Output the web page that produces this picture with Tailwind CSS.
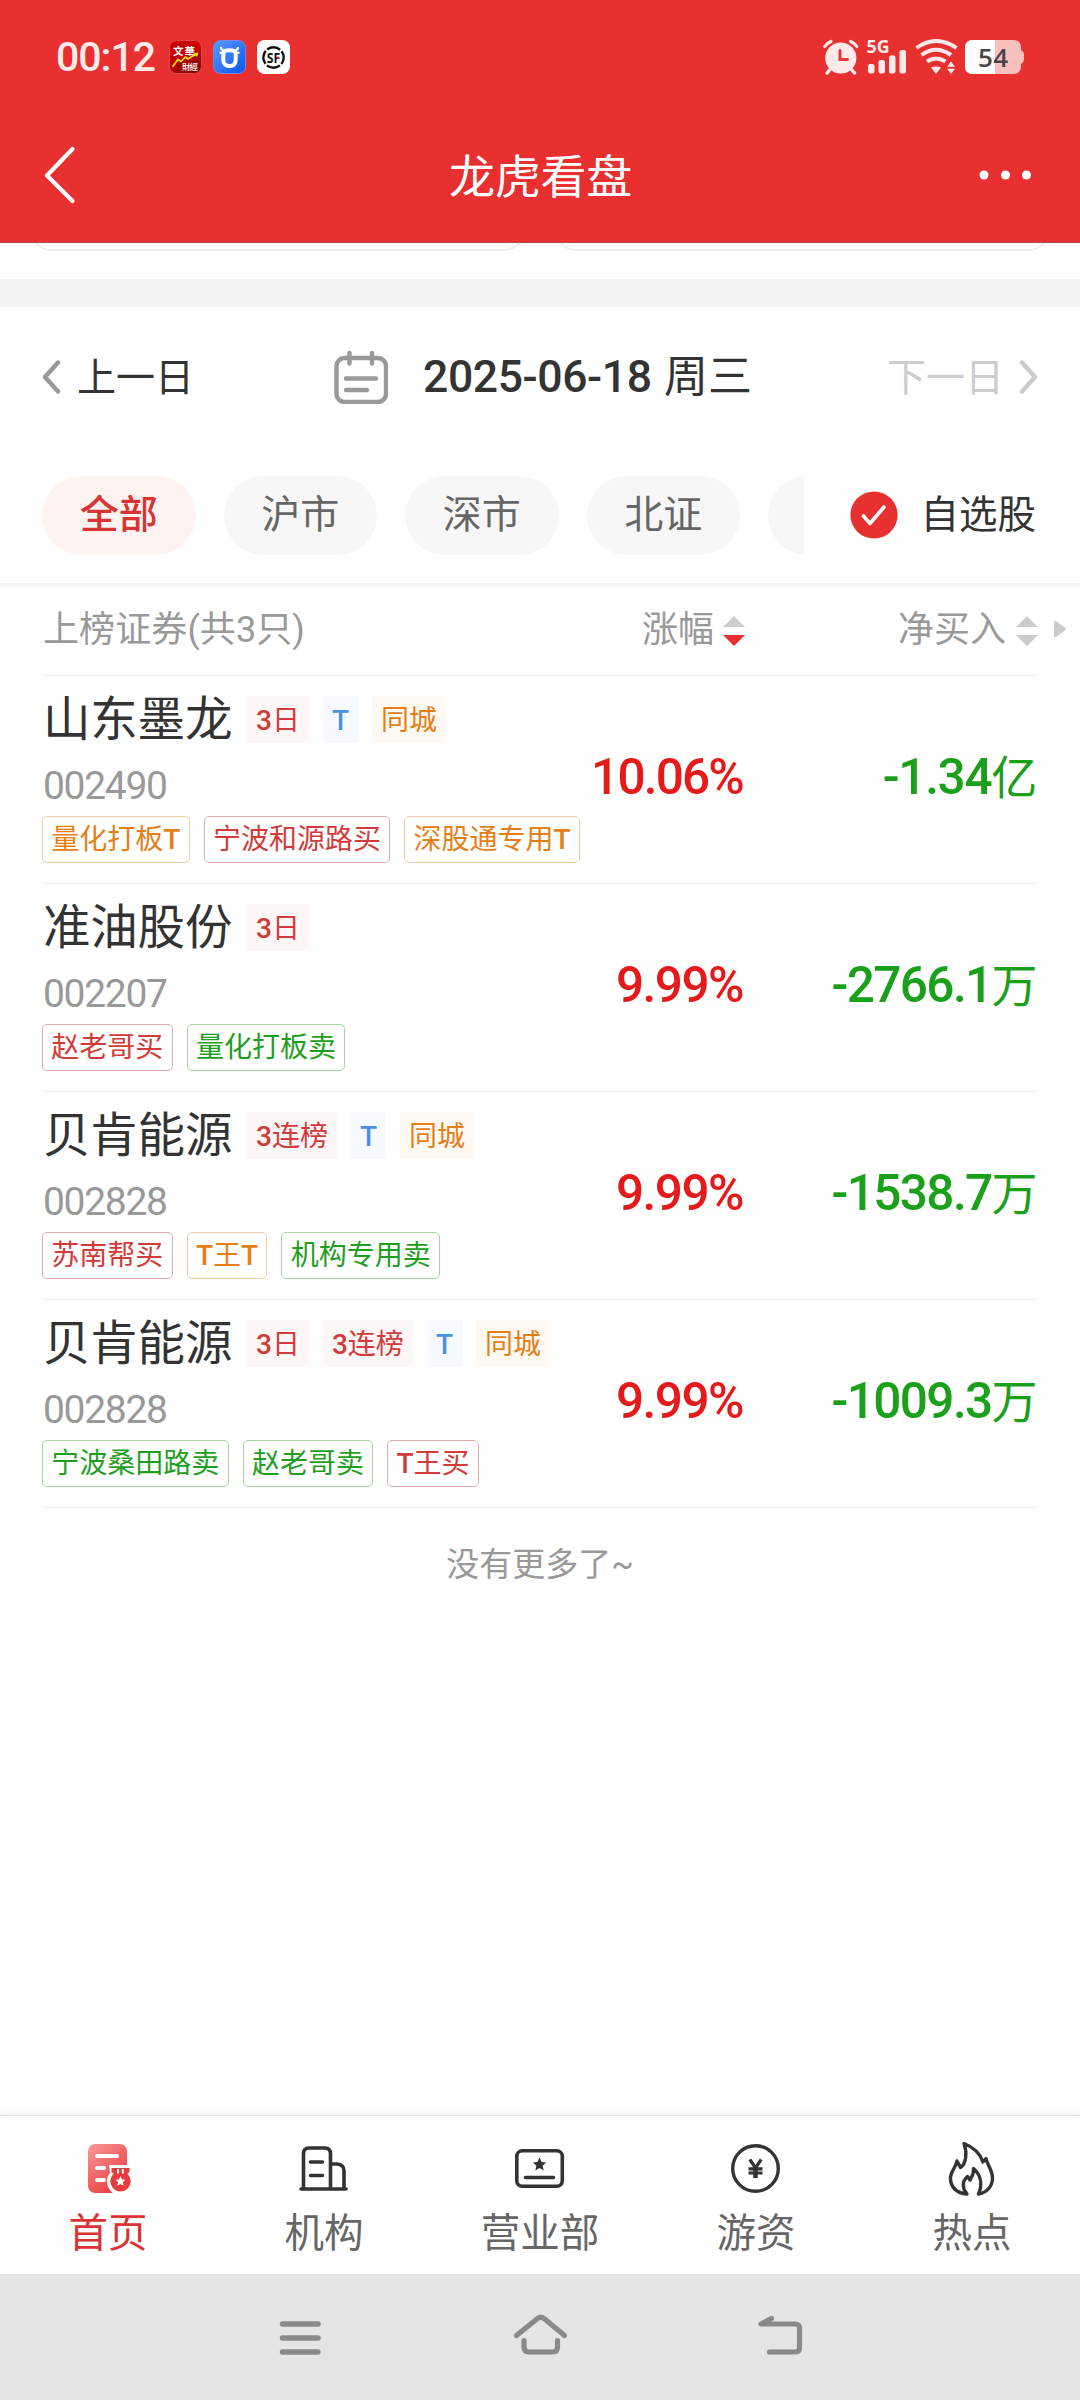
<!DOCTYPE html>
<html lang="zh-CN">
<head>
  <meta charset="UTF-8">
  <meta name="viewport" content="width=device-width, initial-scale=1.0">
  <title>龙虎看盘</title>
  <script src="https://cdn.jsdelivr.net/npm/@tailwindcss/browser@4"></script>
  <style>
    body {
      font-family: Roboto, 'Noto Sans CJK SC', sans-serif;
    }
  </style>
</head>
<body class="w-[1080px] h-[2400px] overflow-hidden bg-white flex flex-col leading-none whitespace-nowrap text-[#333]">

  <!-- Header -->
  <header class="h-[243px] shrink-0 bg-[#e83030] border-b border-[#a84a4a] text-white">
    <div class="h-[114px] flex items-center pl-[56px] pr-[55px]">
      <span class="text-[41px] font-medium text-[#ffeaea] tracking-[-1px] w-[113px]">00:12</span>
      <svg class="w-[33px] h-[34px] shrink-0" viewBox="0 0 33 34">
        <defs><linearGradient id="wh" x1="0" y1="0" x2="0.4" y2="1"><stop offset="0.4" stop-color="#cc0000"/><stop offset="1" stop-color="#8c0606"/></linearGradient></defs>
        <rect x="0.5" y="0.5" width="32" height="33" rx="7" fill="url(#wh)" stroke="#e04848"/>
        <text x="4" y="14.5" font-size="10.5" font-weight="700" fill="#fff" textLength="22" font-family="Noto Sans CJK TC">文華</text>
        <text x="13" y="29.5" font-size="8.5" font-weight="500" fill="#fff" textLength="16" font-family="Noto Sans CJK TC">財經</text>
        <path d="M3.5 27 9 19.5 12 21.5 16.5 17 19 19 27 14" fill="none" stroke="#ffe600" stroke-width="1.7"/>
        <path d="M24.5 13.5 29.5 12.5 28 17z" fill="#ffe600"/>
      </svg>
      <svg class="w-[33px] h-[34px] shrink-0 ml-[11px]" viewBox="0 0 33 34">
        <defs><linearGradient id="bull" x1="0" y1="0" x2="1" y2="1"><stop offset="0" stop-color="#5b9bfb"/><stop offset="1" stop-color="#0a55f0"/></linearGradient></defs>
        <rect x="0.5" y="0.5" width="32" height="33" rx="7" fill="url(#bull)" stroke="#7d86e0"/>
        <path d="M11.5 11Q16.500 9.500 21.500 11 22.500 12 22.700 15.500V19.500Q22.700 26 16.500 26T10.300 19.500V15.500Q10.500 12 11.500 11z" fill="none" stroke="#fff" stroke-width="4"/>
        <path d="M8 7Q8 10.500 12 11M6.500 12.500 11 13.500M25 7Q25 10.500 21 11M26.500 12.500 22 13.500" fill="none" stroke="#fff" stroke-width="2.200"/>
      </svg>
      <svg class="w-[33px] h-[34px] shrink-0 ml-[11px]" viewBox="0 0 33 34">
        <rect width="33" height="34" rx="7.500" fill="#fff"/>
        <circle cx="16.500" cy="17.500" r="10.200" fill="none" stroke="#111" stroke-width="2.400" stroke-dasharray="14.020 2" stroke-dashoffset="-9"/>
        <text x="9.700" y="22.500" font-size="13.500" font-weight="700" fill="#111" textLength="13.500" lengthAdjust="spacingAndGlyphs" font-family="Open Sans">SF</text>
        <circle cx="21" cy="17.600" r="1.200" fill="#e33"/>
      </svg>

      <div class="ml-auto flex items-center">
        <svg class="w-[36px] h-[36px]" viewBox="0 0 36 36">
          <circle cx="17.800" cy="19" r="15.600" fill="#ffeaea"/>
          <path d="M1.800 7.500Q4 4 8 2.500M33.800 7.500Q31.600 4 27.600 2.500" fill="none" stroke="#ffeaea" stroke-width="3.200" stroke-linecap="round"/>
          <path d="M6.500 31 4.200 34M29 31 31.500 34" stroke="#ffeaea" stroke-width="3.500" stroke-linecap="round"/>
          <path d="M17 11.500V20.500H24.500" fill="none" stroke="#e23a3a" stroke-width="3" stroke-linecap="round"/>
        </svg>
        <svg class="w-[42px] h-[36px] ml-[7px] overflow-visible" viewBox="0 0 42 36" fill="#ffeaea">
          <text x="0.500" y="13.500" font-size="17" font-weight="700" textLength="23" lengthAdjust="spacingAndGlyphs" font-family="Open Sans">5G</text>
          <rect x="2" y="25" width="6.500" height="9.500" rx="2.200"/>
          <rect x="12.500" y="21" width="6.500" height="13.500" rx="2.200"/>
          <rect x="23" y="16.500" width="6.500" height="18" rx="2.200"/>
          <rect x="33.500" y="11" width="6.500" height="23.500" rx="2.200"/>
        </svg>
        <svg class="w-[43px] h-[36px] ml-[7px]" viewBox="0 0 43 36">
          <path d="M1.500 9Q21 -5 41.500 9M6.500 16Q21 5.500 36 16M12 22.500Q21 16.500 30.500 22.500" fill="none" stroke="#ffeaea" stroke-width="4"/>
          <path d="M16 28.500Q21 26.500 26 28.500L21 35zM32 27.800 36 22.500 40 27.800zM32 29.800 36 35 40 29.800z" fill="#ffeaea"/>
        </svg>
        <svg class="w-[60px] h-[34px] ml-[7px]" viewBox="0 0 60 34">
          <path d="M8 0H48Q56 0 56 8V10Q59 12 59 14V20Q59 22 56 24V26Q56 34 48 34H8Q0 34 0 26V8Q0 0 8 0z" fill="#f8bfbf"/>
          <path d="M8 0H30V34H8Q0 34 0 26V8Q0 0 8 0z" fill="#fff"/>
          <text x="13" y="26.500" font-size="26" font-weight="600" fill="#4a4444" textLength="30" font-family="Open Sans">54</text>
        </svg>
      </div>
    </div>
    <div class="h-[122px] flex items-center justify-between pl-[43px] pr-[47px]">
      <svg class="w-[33px] h-[58px]" viewBox="0 0 33 58"><path d="M29.500 3 4 29.500 29.500 55" fill="none" stroke="#fff" stroke-width="4.200" stroke-linecap="round" stroke-linejoin="round"/></svg>
      <h1 class="text-[46px] pt-[4px] pl-[26px] tracking-[-0.3px]">龙虎看盘</h1>
      <svg class="w-[54px] h-[10px]" viewBox="0 0 54 10" fill="#fff"><circle cx="5" cy="5" r="4.500"/><circle cx="26.500" cy="5" r="4.500"/><circle cx="47.500" cy="5" r="4.500"/></svg>
    </div>
  </header>

  <!-- Bottom edges of the cards scrolled under the header -->
  <div class="h-[36px] shrink-0 overflow-hidden flex items-start gap-[26px] pl-[28px]">
    <div class="w-[499px] h-[48px] -mt-[40px] rounded-[24px] border-2 border-[#eee]"></div>
    <div class="w-[499px] h-[48px] -mt-[40px] rounded-[24px] border-2 border-[#eee]"></div>
  </div>
  <div class="h-[28px] shrink-0 bg-[#f4f4f4]"></div>

  <!-- Date switcher -->
  <div class="h-[140px] shrink-0 flex items-center pl-[42px] pr-[42px]">
    <svg class="w-[19px] h-[34px]" viewBox="0 0 19 34"><path d="M16 2.500 3 17 16 31.500" fill="none" stroke="#999" stroke-width="4.400" stroke-linecap="round" stroke-linejoin="round"/></svg>
    <span class="text-[39px] ml-[16px] pt-[3px]">上一日</span>
    <svg class="w-[54px] h-[54px] ml-[140px]" viewBox="0 0 54 54" fill="none" stroke="#999" stroke-width="4.400" stroke-linecap="round">
      <rect x="2.500" y="8" width="49.500" height="44" rx="8"/>
      <path d="M15.500 3V13.500M38 3V13.500M12 28.500H42M12 40H33"/>
    </svg>
    <div class="ml-[35px] pt-[1px] flex items-baseline">
      <span class="text-[44.5px] font-medium tracking-[-0.4px] w-[241px]">2025-06-18</span>
      <span class="text-[44px]">周三</span>
    </div>
    <span class="ml-auto text-[39px] text-[#ccc] pt-[3px]">下一日</span>
    <svg class="w-[19px] h-[34px] ml-[15px]" viewBox="0 0 19 34"><path d="M3 2.500 16 17 3 31.500" fill="none" stroke="#ccc" stroke-width="4.400" stroke-linecap="round" stroke-linejoin="round"/></svg>
  </div>

  <!-- Market filter -->
  <div class="h-[139px] shrink-0 flex items-center border-b-[3px] border-[#f4f4f4] pl-[42px] pr-[44px]">
    <div class="w-[762px] h-[79px] overflow-hidden flex gap-[28px] text-[39px] text-[#666]">
      <div class="w-[153.5px] h-[79px] shrink-0 rounded-full bg-[#fff3f2] text-[#d93434] font-medium flex items-center justify-center">全部</div>
      <div class="w-[153.5px] h-[79px] shrink-0 rounded-full bg-[#f7f7f7] flex items-center justify-center">沪市</div>
      <div class="w-[153.5px] h-[79px] shrink-0 rounded-full bg-[#f7f7f7] flex items-center justify-center">深市</div>
      <div class="w-[153.5px] h-[79px] shrink-0 rounded-full bg-[#f7f7f7] flex items-center justify-center">北证</div>
      <div class="w-[153.5px] h-[79px] shrink-0 rounded-full bg-[#f7f7f7]"></div>
    </div>
    <svg class="w-[48px] h-[48px] ml-[46px]" viewBox="0 0 48 48"><circle cx="24" cy="24" r="23.600" fill="#e83030"/><path d="M13.500 25 20 32.500 34 16" fill="none" stroke="#fff" stroke-width="3.600" stroke-linecap="round" stroke-linejoin="round"/></svg>
    <span class="ml-auto text-[38.5px]">自选股</span>
  </div>

  <!-- Table head -->
  <div class="h-[90px] shrink-0 ml-[42px] mr-[42px] border-b border-[#ededed] flex items-center text-[36px] text-[#999]">
    <div class="w-[540px] shrink-0 pb-[2px] pl-[1px] tracking-[0.1px]">上榜证券(共3只)</div>
    <div class="w-[163px] shrink-0 flex items-center justify-end">
      <span class="pb-[2px]">涨幅</span>
      <svg class="w-[22px] h-[30px] ml-[9px]" viewBox="0 0 22 30"><path d="M0 11 11 0 22 11z" fill="#ccc"/><path d="M0 19 11 30 22 19z" fill="#e83030"/></svg>
    </div>
    <div class="flex-1 flex items-center justify-end">
      <span class="pb-[2px]">净买入</span>
      <svg class="w-[22px] h-[30px] ml-[10px]" viewBox="0 0 22 30" fill="#ccc"><path d="M0 11 11 0 22 11zM0 19 11 30 22 19z"/></svg>
    </div>
    <svg class="w-[13px] h-[18px] ml-[16px] -mr-[29px] mb-[4px]" viewBox="0 0 13 18" fill="#ccc"><path d="M0 2Q0 0 2 1L11 7.500Q13 9 11 10.500L2 17Q0 18 0 16z"/></svg>
  </div>

  <!-- Stock list -->
  <main class="flex-1 px-[42px]">
    <div class="h-[208px] border-b border-[#ededed] flex items-center">
      <div class="w-[540px] shrink-0">
        <div class="h-[47px] flex items-center gap-[14px] text-[28px]">
          <span class="text-[47.5px] w-[191px] pt-[3px] pl-[1px] tracking-[-0.2px]">山东墨龙</span>
          <span class="h-[47px] px-[9px] pt-[2px] bg-[#fdf6f6] text-[#d33a3a] flex items-center"><b class="font-medium">3</b>日</span>
          <span class="h-[47px] px-[9px] pt-[2px] bg-[#f6faff] text-[#4a90e2] flex items-center"><b class="font-medium">T</b></span>
          <span class="h-[47px] px-[9px] pt-[2px] bg-[#fff9f4] text-[#e67e17] flex items-center">同城</span>
        </div>
        <div class="h-[73px] pt-[13px] flex items-center text-[39px] text-[#999] tracking-[-1.3px] pl-[1px]">002490</div>
        <div class="flex gap-[14px] text-[28px]">
          <span class="h-[47px] px-[8.3px] pt-[1px] rounded-[5px] border border-[#f3cfa5] text-[#e67e17] flex items-center">量化打板<b class="font-medium">T</b></span>
          <span class="h-[47px] px-[8.3px] pt-[1px] rounded-[5px] border border-[#e3abab] text-[#d33a3a] flex items-center">宁波和源路买</span>
          <span class="h-[47px] px-[8.3px] pt-[1px] rounded-[5px] border border-[#f3cfa5] text-[#e67e17] flex items-center">深股通专用<b class="font-medium">T</b></span>
        </div>
      </div>
      <div class="w-[161px] shrink-0 pb-[3px] flex justify-end text-[49.5px] font-medium tracking-[-1.8px] text-[#e61a1a]">10.06%</div>
      <div class="flex-1 pb-[3px] pr-[2px] flex justify-end items-baseline text-[49.5px] font-medium tracking-[-1.3px] text-[#1aa01a]">-1.34<span class="text-[46px] font-normal">亿</span></div>
    </div>

    <div class="h-[208px] border-b border-[#ededed] flex items-center">
      <div class="w-[540px] shrink-0">
        <div class="h-[47px] flex items-center gap-[14px] text-[28px]">
          <span class="text-[47.5px] w-[191px] pt-[3px] pl-[1px] tracking-[-0.2px]">准油股份</span>
          <span class="h-[47px] px-[9px] pt-[2px] bg-[#fdf6f6] text-[#d33a3a] flex items-center"><b class="font-medium">3</b>日</span>
        </div>
        <div class="h-[73px] pt-[13px] flex items-center text-[39px] text-[#999] tracking-[-1.3px] pl-[1px]">002207</div>
        <div class="flex gap-[14px] text-[28px]">
          <span class="h-[47px] px-[8.3px] pt-[1px] rounded-[5px] border border-[#e3abab] text-[#d33a3a] flex items-center">赵老哥买</span>
          <span class="h-[47px] px-[8.3px] pt-[1px] rounded-[5px] border border-[#a3d6a3] text-[#1f9e1f] flex items-center">量化打板卖</span>
        </div>
      </div>
      <div class="w-[161px] shrink-0 pb-[3px] flex justify-end text-[49.5px] font-medium tracking-[-1.5px] text-[#e61a1a]">9.99%</div>
      <div class="flex-1 pb-[3px] pr-[2px] flex justify-end items-baseline text-[49.5px] font-medium tracking-[-1.6px] text-[#1aa01a]">-2766.1<span class="text-[46px] font-normal">万</span></div>
    </div>

    <div class="h-[208px] border-b border-[#ededed] flex items-center">
      <div class="w-[540px] shrink-0">
        <div class="h-[47px] flex items-center gap-[14px] text-[28px]">
          <span class="text-[47.5px] w-[191px] pt-[3px] pl-[1px] tracking-[-0.2px]">贝肯能源</span>
          <span class="h-[47px] px-[9px] pt-[2px] bg-[#fdf6f6] text-[#d33a3a] flex items-center"><b class="font-medium">3</b>连榜</span>
          <span class="h-[47px] px-[9px] pt-[2px] bg-[#f6faff] text-[#4a90e2] flex items-center"><b class="font-medium">T</b></span>
          <span class="h-[47px] px-[9px] pt-[2px] bg-[#fff9f4] text-[#e67e17] flex items-center">同城</span>
        </div>
        <div class="h-[73px] pt-[13px] flex items-center text-[39px] text-[#999] tracking-[-1.3px] pl-[1px]">002828</div>
        <div class="flex gap-[14px] text-[28px]">
          <span class="h-[47px] px-[8.3px] pt-[1px] rounded-[5px] border border-[#e3abab] text-[#d33a3a] flex items-center">苏南帮买</span>
          <span class="h-[47px] px-[8.3px] pt-[1px] rounded-[5px] border border-[#f3cfa5] text-[#e67e17] flex items-center"><b class="font-medium">T</b>王<b class="font-medium">T</b></span>
          <span class="h-[47px] px-[8.3px] pt-[1px] rounded-[5px] border border-[#a3d6a3] text-[#1f9e1f] flex items-center">机构专用卖</span>
        </div>
      </div>
      <div class="w-[161px] shrink-0 pb-[3px] flex justify-end text-[49.5px] font-medium tracking-[-1.5px] text-[#e61a1a]">9.99%</div>
      <div class="flex-1 pb-[3px] pr-[2px] flex justify-end items-baseline text-[49.5px] font-medium tracking-[-1.6px] text-[#1aa01a]">-1538.7<span class="text-[46px] font-normal">万</span></div>
    </div>

    <div class="h-[208px] border-b border-[#ededed] flex items-center">
      <div class="w-[540px] shrink-0">
        <div class="h-[47px] flex items-center gap-[14px] text-[28px]">
          <span class="text-[47.5px] w-[191px] pt-[3px] pl-[1px] tracking-[-0.2px]">贝肯能源</span>
          <span class="h-[47px] px-[9px] pt-[2px] bg-[#fdf6f6] text-[#d33a3a] flex items-center"><b class="font-medium">3</b>日</span>
          <span class="h-[47px] px-[9px] pt-[2px] bg-[#fdf6f6] text-[#d33a3a] flex items-center"><b class="font-medium">3</b>连榜</span>
          <span class="h-[47px] px-[9px] pt-[2px] bg-[#f6faff] text-[#4a90e2] flex items-center"><b class="font-medium">T</b></span>
          <span class="h-[47px] px-[9px] pt-[2px] bg-[#fff9f4] text-[#e67e17] flex items-center">同城</span>
        </div>
        <div class="h-[73px] pt-[13px] flex items-center text-[39px] text-[#999] tracking-[-1.3px] pl-[1px]">002828</div>
        <div class="flex gap-[14px] text-[28px]">
          <span class="h-[47px] px-[8.3px] pt-[1px] rounded-[5px] border border-[#a3d6a3] text-[#1f9e1f] flex items-center">宁波桑田路卖</span>
          <span class="h-[47px] px-[8.3px] pt-[1px] rounded-[5px] border border-[#a3d6a3] text-[#1f9e1f] flex items-center">赵老哥卖</span>
          <span class="h-[47px] px-[8.3px] pt-[1px] rounded-[5px] border border-[#e3abab] text-[#d33a3a] flex items-center"><b class="font-medium">T</b>王买</span>
        </div>
      </div>
      <div class="w-[161px] shrink-0 pb-[3px] flex justify-end text-[49.5px] font-medium tracking-[-1.5px] text-[#e61a1a]">9.99%</div>
      <div class="flex-1 pb-[3px] pr-[2px] flex justify-end items-baseline text-[49.5px] font-medium tracking-[-1.6px] text-[#1aa01a]">-1009.3<span class="text-[46px] font-normal">万</span></div>
    </div>

    <p class="pt-[40px] text-center text-[33px] text-[#999]">没有更多了~</p>
  </main>

  <!-- Tab bar -->
  <nav class="h-[159px] shrink-0 grid grid-cols-5 border-t border-[#e2e2e2] shadow-[0_-2px_10px_rgba(0,0,0,0.06)] text-[39.5px] text-[#666]">
    <div class="flex flex-col items-center pt-[22px] text-[#d93434]">
      <svg class="w-[60px] h-[60px]" viewBox="0 0 60 60">
        <defs><linearGradient id="home" x1="0" y1="0" x2="0.7" y2="1"><stop offset="0" stop-color="#f79a9a"/><stop offset="1" stop-color="#e93b3b"/></linearGradient></defs>
        <rect x="10" y="6" width="39" height="49" rx="7" fill="url(#home)"/>
        <path d="M19 18H39M19 30H26M19 42H26" stroke="#fff" stroke-width="4" stroke-linecap="round"/>
        <path d="M31 27H54V34Q56 38 56 43A13.500 13.500 0 0 1 36 56Q29 51 29 43 29 38 32 35z" fill="#fff"/>
        <path d="M33.500 30H51.500V34L49 36H36L33.500 34z" fill="#e63c3c"/>
        <circle cx="42.500" cy="43.300" r="10.200" fill="#e93b3b"/>
        <path d="M40 31V35.500M44.800 31V35.500" stroke="#fff" stroke-width="2"/>
        <path d="M42.500 38 44 41.500 47.500 41.800 44.900 44.200 45.700 47.700 42.500 45.900 39.300 47.700 40.100 44.200 37.500 41.800 41 41.500z" fill="#fff"/>
      </svg>
      <span class="mt-[16px]">首页</span>
    </div>
    <div class="flex flex-col items-center pt-[22px]">
      <svg class="w-[60px] h-[60px]" viewBox="0 0 60 60" fill="none" stroke="#333" stroke-width="3.600" stroke-linecap="round" stroke-linejoin="round">
        <path d="M7 51H52M9.500 51V16Q9.500 10 15 10H31Q36.500 10 36.500 16V51M36.500 26H43Q50 26.500 50 33V51M16.500 24H28.500M16.500 37.500H28.500"/>
      </svg>
      <span class="mt-[16px]">机构</span>
    </div>
    <div class="flex flex-col items-center pt-[22px]">
      <svg class="w-[60px] h-[60px]" viewBox="0 0 60 60" fill="none" stroke="#333" stroke-width="3.600" stroke-linecap="round">
        <rect x="6.800" y="12.800" width="45.500" height="35.500" rx="5.500"/>
        <path d="M15.500 39.500H43.500"/>
        <path d="M29.500 19.300 31.500 24 36.200 24.400 32.600 27.700 33.700 32.400 29.500 30 25.300 32.400 26.400 27.700 22.800 24.400 27.500 24z" fill="#333" stroke="none"/>
      </svg>
      <span class="mt-[16px]">营业部</span>
    </div>
    <div class="flex flex-col items-center pt-[22px]">
      <svg class="w-[60px] h-[60px]" viewBox="0 0 60 60" fill="none" stroke="#333">
        <circle cx="29.500" cy="30.500" r="22.800" stroke-width="3.400"/>
        <path d="M23.800 21.500 29.500 30 35.200 21.500M29.500 30V40M22.500 30.800H36.500M22.500 35H36.500" stroke-width="3.200"/>
        <path d="M29.500 29V40" stroke-width="4.500"/>
      </svg>
      <span class="mt-[16px]">游资</span>
    </div>
    <div class="flex flex-col items-center pt-[22px]">
      <svg class="w-[60px] h-[60px]" viewBox="0 0 60 60" fill="none" stroke="#333" stroke-width="3.400" stroke-linecap="round" stroke-linejoin="round">
        <path d="M25 56C14 55.500 8 48 8.500 39.500 9 33 14 29 15 23L18.500 29.500C24 26 25.500 15 22 5.500 31 9 38 15 41 24L44 20.500C45 27 51 32 50.500 41 50 49 44 55 36.500 56 40 48 40 38 31.500 30.500 32 35 30.500 38 28 42L25.500 38.500C20 43 20 50 25 56z"/>
      </svg>
      <span class="mt-[16px]">热点</span>
    </div>
  </nav>

  <!-- System navigation -->
  <footer class="h-[126px] shrink-0 bg-[#e5e5e5] flex items-center justify-center gap-[187px] pb-[4px]">
    <svg class="w-[54px] h-[46px]" viewBox="0 0 54 46"><path d="M10.500 12H46M10.500 26H46M10.500 40H46" stroke="#8a8a8a" stroke-width="5.500" stroke-linecap="round"/></svg>
    <svg class="w-[54px] h-[46px]" viewBox="0 0 54 46" fill="none" stroke="#8a8a8a" stroke-width="5.200" stroke-linecap="round" stroke-linejoin="round">
      <path d="M3.500 23.500 24.500 6.500Q27.800 4 31.100 6.500L51.500 23.500M11 28.500V35Q11 40 16 40H39.500Q44.500 40 44.500 35V28.500"/>
    </svg>
    <svg class="w-[54px] h-[46px]" viewBox="0 0 54 46" fill="none" stroke="#8a8a8a" stroke-width="5.200" stroke-linecap="round" stroke-linejoin="round">
      <path d="M17.500 6.500 7 12H41Q45.500 12 45.500 16V36Q45.500 40 41 40H15.500"/>
    </svg>
  </footer>
</body>
</html>
